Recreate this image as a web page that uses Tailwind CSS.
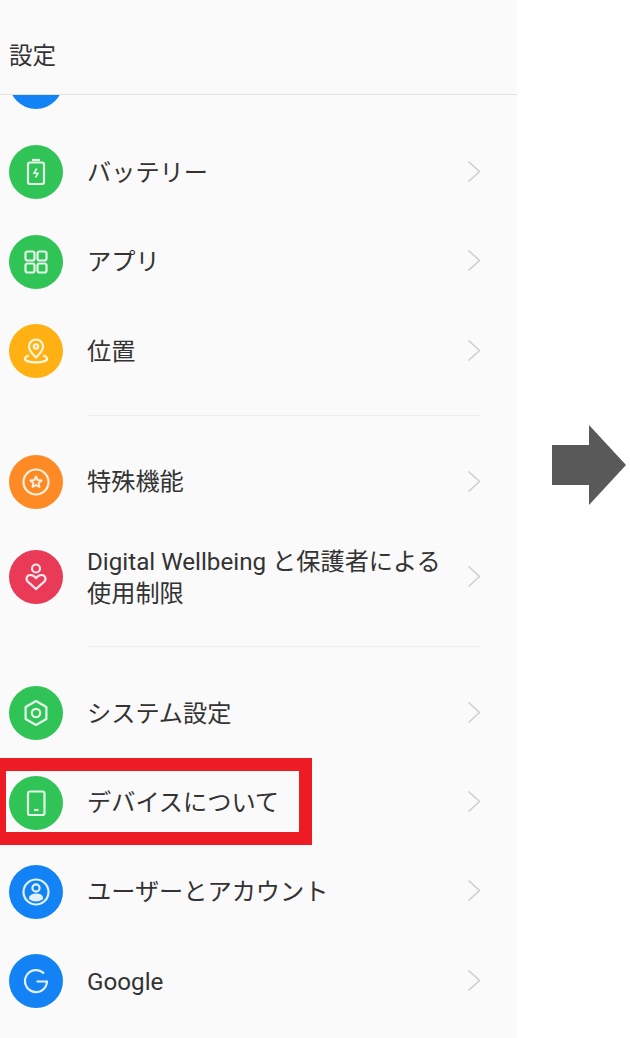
<!DOCTYPE html>
<html lang="ja">
  <head>
    <meta charset="UTF-8" />
    <meta name="viewport" content="width=device-width, initial-scale=1.0" />
    <title>設定</title>
    <script src="https://cdn.jsdelivr.net/npm/@tailwindcss/browser@4"></script>
  </head>
  <body class="bg-white font-['Roboto','Noto_Sans_CJK_JP',sans-serif] text-[#333] overflow-hidden">
    <div class="flex h-[1038px] w-[630px]">
      <!-- Settings panel -->
      <div class="relative flex h-full w-[517px] shrink-0 flex-col overflow-hidden bg-[#fafafa]">
        <header class="flex h-[95px] shrink-0 items-center border-b border-[#e2e2e2] pt-[20px] pl-[9px] text-[23.5px]">設定</header>

        <main class="flex-1 overflow-hidden">
          <!-- Row scrolled under the header -->
          <div class="mt-[-58px] flex h-[90px] items-center pl-[9px]">
            <span class="h-[54px] w-[54px] rounded-full bg-[#1282f5]"></span>
          </div>

          <div class="flex h-[90px] items-center pl-[9px] pr-[36px]">
            <span class="flex h-[54px] w-[54px] shrink-0 items-center justify-center rounded-full bg-[#2fc455]">
              <svg width="54" height="54" viewBox="0 0 54 54" fill="none" stroke="#e6f8ea" stroke-width="2.2">
                <rect x="19" y="17.5" width="16" height="21.5" rx="2" />
                <path d="M23 15h8" />
                <path d="M27.800 23.500l-2.800 4.700h4l-2.500 4.300" stroke-width="1.600" />
              </svg>
            </span>
            <span class="ml-[24px] flex-1 pt-[2px] text-[24.2px]">バッテリー</span>
            <svg class="mb-[2px]" width="14" height="23" viewBox="0 0 14 23" fill="none" stroke="#cfcfcf" stroke-width="1.6"><path d="M1.500 1.500L12.500 11.500L1.500 21.500" /></svg>
          </div>

          <div class="flex h-[89px] items-center pl-[9px] pr-[36px]">
            <span class="flex h-[54px] w-[54px] shrink-0 items-center justify-center rounded-full bg-[#2fc455]">
              <svg width="54" height="54" viewBox="0 0 54 54" fill="none" stroke="#e6f8ea" stroke-width="2.2">
                <rect x="16.500" y="16.500" width="9" height="9" rx="2" />
                <rect x="28.500" y="16.500" width="9" height="9" rx="2" />
                <rect x="16.500" y="28.500" width="9" height="9" rx="2" />
                <rect x="28.500" y="28.500" width="9" height="9" rx="2" />
              </svg>
            </span>
            <span class="ml-[24px] flex-1 pt-[2px] text-[24.2px]">アプリ</span>
            <svg class="mb-[2px]" width="14" height="23" viewBox="0 0 14 23" fill="none" stroke="#cfcfcf" stroke-width="1.6"><path d="M1.500 1.500L12.500 11.500L1.500 21.500" /></svg>
          </div>

          <div class="flex h-[90px] items-center pl-[9px] pr-[36px]">
            <span class="flex h-[54px] w-[54px] shrink-0 items-center justify-center rounded-full bg-[#ffb114]">
              <svg width="54" height="54" viewBox="0 0 54 54" fill="none" stroke="#fff5dc" stroke-width="2.2">
                <path d="M27 33.500c-3.600-3.400-7-6.800-7-11a7 7 0 0 1 14 0c0 4.200-3.400 7.600-7 11z" />
                <circle cx="27" cy="22.500" r="2.200" />
                <path d="M20 31.500c-2.600.7-4.200 1.800-4.200 3.200 0 2.100 5 3.600 11.200 3.600s11.200-1.500 11.200-3.600c0-1.400-1.600-2.500-4.200-3.200" />
              </svg>
            </span>
            <span class="ml-[24px] flex-1 pt-[2px] text-[24.2px]">位置</span>
            <svg class="mb-[2px]" width="14" height="23" viewBox="0 0 14 23" fill="none" stroke="#cfcfcf" stroke-width="1.6"><path d="M1.500 1.500L12.500 11.500L1.500 21.500" /></svg>
          </div>

          <div class="flex h-[41px] items-center pb-[2px] pl-[88px] pr-[37px]"><div class="h-px w-full bg-[#eeeeee]"></div></div>

          <div class="flex h-[90px] items-center pl-[9px] pr-[36px]">
            <span class="flex h-[54px] w-[54px] shrink-0 items-center justify-center rounded-full bg-[#fd8a24]">
              <svg width="54" height="54" viewBox="0 0 54 54" fill="none" stroke="#fff0e2" stroke-width="2.2">
                <circle cx="27" cy="27" r="12.500" />
                <path d="M27 21.500l1.700 3.500 3.800.5-2.800 2.600.7 3.800-3.400-1.800-3.400 1.800.7-3.800-2.800-2.600 3.800-.5z" stroke-width="2" stroke-linejoin="round" />
              </svg>
            </span>
            <span class="ml-[24px] flex-1 text-[24.2px]">特殊機能</span>
            <svg class="mb-[2px]" width="14" height="23" viewBox="0 0 14 23" fill="none" stroke="#cfcfcf" stroke-width="1.6"><path d="M1.500 1.500L12.500 11.500L1.500 21.500" /></svg>
          </div>

          <div class="flex h-[100px] items-center pl-[9px] pr-[36px]">
            <span class="flex h-[54px] w-[54px] shrink-0 items-center justify-center rounded-full bg-[#e93a58]">
              <svg width="54" height="54" viewBox="0 0 54 54" fill="none" stroke="#fde8ec" stroke-width="2.2">
                <circle cx="27" cy="18.500" r="4" />
                <path d="M27 39l-8.200-7.400c-2.500-2.300-1-6.600 2.500-6.600 2.500 0 4.300 1.300 5.700 3 1.400-1.700 3.200-3 5.700-3 3.500 0 5 4.300 2.500 6.600z" />
              </svg>
            </span>
            <span class="ml-[24px] flex-1 pt-[2px] text-[24.2px] leading-[32px]">Digital Wellbeing と保護者による<br />使用制限</span>
            <svg class="mb-[2px]" width="14" height="23" viewBox="0 0 14 23" fill="none" stroke="#cfcfcf" stroke-width="1.6"><path d="M1.500 1.500L12.500 11.500L1.500 21.500" /></svg>
          </div>

          <div class="flex h-[41px] items-center pb-[2px] pl-[88px] pr-[37px]"><div class="h-px w-full bg-[#eeeeee]"></div></div>

          <div class="flex h-[90px] items-center pl-[9px] pr-[36px]">
            <span class="flex h-[54px] w-[54px] shrink-0 items-center justify-center rounded-full bg-[#2fc455]">
              <svg width="54" height="54" viewBox="0 0 54 54" fill="none" stroke="#e6f8ea" stroke-width="2.2">
                <path d="M27 15l10.400 6v12L27 39l-10.400-6V21z" stroke-linejoin="round" />
                <circle cx="27" cy="27" r="4.200" />
              </svg>
            </span>
            <span class="ml-[24px] flex-1 pt-[2px] text-[24.2px]">システム設定</span>
            <svg class="mb-[2px]" width="14" height="23" viewBox="0 0 14 23" fill="none" stroke="#cfcfcf" stroke-width="1.6"><path d="M1.500 1.500L12.500 11.500L1.500 21.500" /></svg>
          </div>

          <div class="flex h-[89px] items-center pl-[9px] pr-[36px]">
            <span class="flex h-[54px] w-[54px] shrink-0 items-center justify-center rounded-full bg-[#2fc455]">
              <svg width="54" height="54" viewBox="0 0 54 54" fill="none" stroke="#e6f8ea" stroke-width="2.2">
                <rect x="19" y="15.500" width="16.500" height="23.500" rx="2" />
                <path d="M25 34h4.500" />
              </svg>
            </span>
            <span class="ml-[24px] flex-1 pt-[2px] text-[24.2px]">デバイスについて</span>
            <svg class="mb-[2px]" width="14" height="23" viewBox="0 0 14 23" fill="none" stroke="#cfcfcf" stroke-width="1.6"><path d="M1.500 1.500L12.500 11.500L1.500 21.500" /></svg>
          </div>

          <div class="flex h-[89px] items-center pl-[9px] pr-[36px]">
            <span class="flex h-[54px] w-[54px] shrink-0 items-center justify-center rounded-full bg-[#1282f5]">
              <svg width="54" height="54" viewBox="0 0 54 54" fill="none" stroke="#e3f0fe" stroke-width="2.2">
                <circle cx="27" cy="27" r="12.500" />
                <circle cx="27" cy="23" r="3.600" />
                <path d="M21 33.500c0-2.400 2.700-3.800 6-3.800s6 1.400 6 3.800c-1.600 1.300-3.700 2-6 2s-4.400-.7-6-2z" fill="#e3f0fe" />
              </svg>
            </span>
            <span class="ml-[24px] flex-1 pt-[2px] text-[24.2px]">ユーザーとアカウント</span>
            <svg class="mb-[2px]" width="14" height="23" viewBox="0 0 14 23" fill="none" stroke="#cfcfcf" stroke-width="1.6"><path d="M1.500 1.500L12.500 11.500L1.500 21.500" /></svg>
          </div>

          <div class="flex h-[90px] items-center pl-[9px] pr-[36px]">
            <span class="flex h-[54px] w-[54px] shrink-0 items-center justify-center rounded-full bg-[#1282f5]">
              <svg width="54" height="54" viewBox="0 0 54 54" fill="none" stroke="#e3f0fe" stroke-width="2.2">
                <path d="M35 19.500A11 11 0 1 0 38 27.500H27.500" />
              </svg>
            </span>
            <span class="ml-[24px] flex-1 pt-[2px] text-[24.2px]">Google</span>
            <svg class="mb-[2px]" width="14" height="23" viewBox="0 0 14 23" fill="none" stroke="#cfcfcf" stroke-width="1.6"><path d="M1.500 1.500L12.500 11.500L1.500 21.500" /></svg>
          </div>
        </main>

        <!-- Red highlight around the device row -->
        <div class="absolute left-[-7px] top-[758px] h-[87px] w-[319px] border-[13px] border-[#ed1c24]"></div>
      </div>

      <!-- Arrow to the next step -->
      <div class="flex flex-1 items-center pl-[35px] pb-[108px]">
        <svg width="74" height="80" viewBox="0 0 74 80" fill="#595959"><path d="M0 20H37V0L74 40L37 80V60H0z" /></svg>
      </div>
    </div>
  </body>
</html>
